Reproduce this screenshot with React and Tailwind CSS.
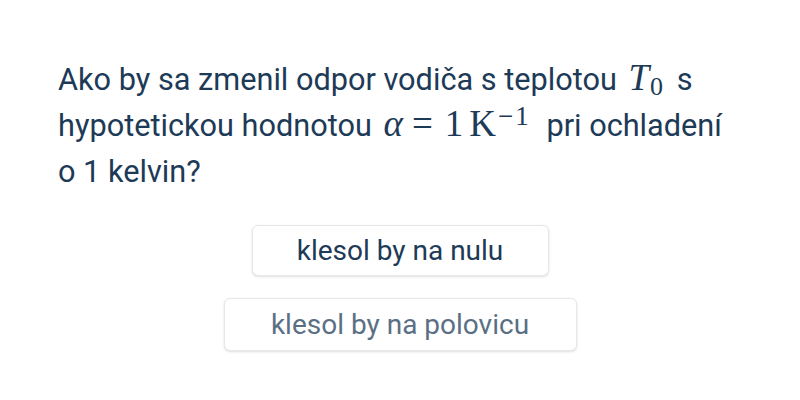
export default function App() {
  const math = { fontFamily: '"Liberation Serif", "DejaVu Serif", serif' };
  return (
    <div className="w-[800px] h-[400px] bg-white overflow-hidden" style={{ fontFamily: 'Roboto, "Liberation Sans", sans-serif' }}>
      <div className="pt-[57px] pl-[58px]">
        <p className="w-[676px] text-[30.7px] leading-[46px] text-[#1d3a57]">
          Ako by sa zmenil odpor vodiča s teplotou{' '}
          <span style={math} className="text-[37px] leading-none italic ml-[4px] mr-[6px]">T<sub className="not-italic text-[26px] leading-none relative top-[5px] ml-[1px]">0</sub></span>{' '}
          s hypotetickou hodnotou{' '}
          <span style={math} className="text-[37px] leading-none ml-[4px] mr-[8px] whitespace-nowrap">
            <span className="italic">α</span>
            <span className="ml-[9px]">=</span>
            <span className="ml-[12px]">1</span>
            <span className="ml-[6px]">K</span>
            <sup className="text-[27px] leading-none relative -top-[11px] ml-[2px] tracking-[2px]">−1</sup>
          </span>{' '}
          pri ochladení o 1 kelvin?
        </p>
      </div>
      <div className="flex flex-col items-center gap-[22px] mt-[30px]">
        <button className="w-[297px] h-[51px] bg-white border border-[#e5e7eb] rounded-md shadow-sm text-[28px] text-[#1d3a57]">
          klesol by na nulu
        </button>
        <button className="w-[353px] h-[53px] bg-white border border-[#e5e7eb] rounded-md shadow-sm text-[28px] text-[#5b6f84]">
          klesol by na polovicu
        </button>
      </div>
    </div>
  );
}
